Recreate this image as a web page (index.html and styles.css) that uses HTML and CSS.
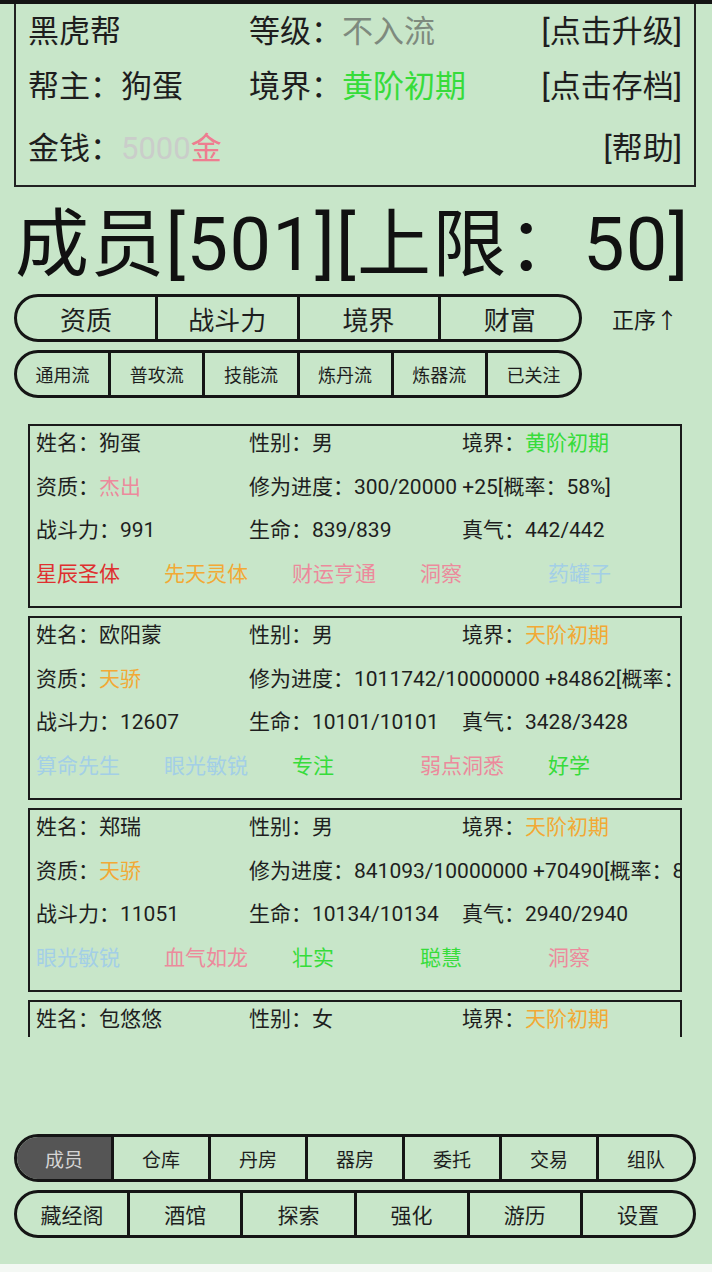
FILE: index.html
```html
<!DOCTYPE html>
<html lang="zh">
<head>
<meta charset="utf-8">
<title>成员</title>
<link rel="stylesheet" href="styles.css">
</head>
<body>
<div class="page">
  <div class="topbar"></div>
  <div class="header">
    <div class="hrow r1">
      <span class="hc1">黑虎帮</span>
      <span class="hc2">等级：<span class="c-gray">不入流</span></span>
      <span class="hc3">[点击升级]</span>
    </div>
    <div class="hrow r2">
      <span class="hc1">帮主：狗蛋</span>
      <span class="hc2">境界：<span class="c-green">黄阶初期</span></span>
      <span class="hc3">[点击存档]</span>
    </div>
    <div class="hrow r3">
      <span class="hc1">金钱：<span class="c-faint">5000</span><span class="c-pink">金</span></span>
      <span class="hc2"></span>
      <span class="hc3">[帮助]</span>
    </div>
  </div>

  <div class="title">成员[501][上限：50]</div>

  <div class="sortrow">
    <div class="pill sort">
      <div class="cell">资质</div>
      <div class="cell">战斗力</div>
      <div class="cell">境界</div>
      <div class="cell">财富</div>
    </div>
    <div class="order">正序↑</div>
  </div>

  <div class="pill filter">
    <div class="cell">通用流</div>
    <div class="cell">普攻流</div>
    <div class="cell">技能流</div>
    <div class="cell">炼丹流</div>
    <div class="cell">炼器流</div>
    <div class="cell">已关注</div>
  </div>

  <div class="list">
    <div class="card">
      <div class="crow"><span class="col">姓名：狗蛋</span><span class="col">性别：男</span><span class="col">境界：<span class="c-green">黄阶初期</span></span></div>
      <div class="crow"><span class="col">资质：<span class="c-pink2">杰出</span></span><span class="col wide">修为进度：300/20000 +25[概率：58%]</span></div>
      <div class="crow"><span class="col">战斗力：991</span><span class="col">生命：839/839</span><span class="col">真气：442/442</span></div>
      <div class="crow traits"><span class="t c-red">星辰圣体</span><span class="t c-orange">先天灵体</span><span class="t c-pink2">财运亨通</span><span class="t c-pink2">洞察</span><span class="t c-blue">药罐子</span></div>
    </div>
    <div class="card">
      <div class="crow"><span class="col">姓名：欧阳蒙</span><span class="col">性别：男</span><span class="col">境界：<span class="c-orange">天阶初期</span></span></div>
      <div class="crow"><span class="col">资质：<span class="c-orange">天骄</span></span><span class="col wide">修为进度：1011742/10000000 +84862[概率：</span></div>
      <div class="crow"><span class="col">战斗力：12607</span><span class="col">生命：10101/10101</span><span class="col">真气：3428/3428</span></div>
      <div class="crow traits"><span class="t c-blue">算命先生</span><span class="t c-blue">眼光敏锐</span><span class="t c-green">专注</span><span class="t c-pink2">弱点洞悉</span><span class="t c-green">好学</span></div>
    </div>
    <div class="card">
      <div class="crow"><span class="col">姓名：郑瑞</span><span class="col">性别：男</span><span class="col">境界：<span class="c-orange">天阶初期</span></span></div>
      <div class="crow"><span class="col">资质：<span class="c-orange">天骄</span></span><span class="col wide">修为进度：841093/10000000 +70490[概率：8</span></div>
      <div class="crow"><span class="col">战斗力：11051</span><span class="col">生命：10134/10134</span><span class="col">真气：2940/2940</span></div>
      <div class="crow traits"><span class="t c-blue">眼光敏锐</span><span class="t c-pink2">血气如龙</span><span class="t c-green">壮实</span><span class="t c-green">聪慧</span><span class="t c-pink2">洞察</span></div>
    </div>
    <div class="card">
      <div class="crow"><span class="col">姓名：包悠悠</span><span class="col">性别：女</span><span class="col">境界：<span class="c-orange">天阶初期</span></span></div>
    </div>
  </div>

  <div class="spacer"></div>

  <div class="pill nav1">
    <div class="cell active">成员</div>
    <div class="cell">仓库</div>
    <div class="cell">丹房</div>
    <div class="cell">器房</div>
    <div class="cell">委托</div>
    <div class="cell">交易</div>
    <div class="cell">组队</div>
  </div>
  <div class="pill nav2">
    <div class="cell">藏经阁</div>
    <div class="cell">酒馆</div>
    <div class="cell">探索</div>
    <div class="cell">强化</div>
    <div class="cell">游历</div>
    <div class="cell">设置</div>
  </div>
  <div class="bottomgap"></div>
  <div class="whitebar"></div>
</div>
</body>
</html>
```

FILE: styles.css
```css
* { box-sizing: border-box; }
html, body {
  margin: 0;
  padding: 0;
  background: #c8e6c9;
}
body {
  width: 712px;
  height: 1272px;
  overflow: hidden;
  font-family: Roboto, "Noto Sans CJK SC", "Noto Sans", sans-serif;
  color: #1e1e1e;
}
.page {
  display: flex;
  flex-direction: column;
  height: 1272px;
}
.topbar {
  height: 4px;
  flex: none;
  background: #141414;
}
.header {
  flex: none;
  height: 183px;
  margin: 0 16px 0 14px;
  border: 2px solid #222;
  border-top: none;
  padding: 0 12px;
  font-size: 31px;
}
.hrow {
  display: flex;
  align-items: center;
  white-space: nowrap;
}
.r1 { height: 48px; }
.r2 { height: 62px; }
.r3 { height: 62px; }
.hc1 { width: 221px; flex: none; }
.hc2 { flex: 1; }
.hc3 { flex: none; text-align: right; }

.c-gray { color: #7e8a7e; }
.c-green { color: #36dc3a; }
.c-faint { color: #cacdca; }
.c-pink { color: #ee7d90; }
.c-pink2 { color: #ec8a9c; }
.c-orange { color: #f2a935; }
.c-red { color: #df3030; }
.c-blue { color: #a3cfe6; }

.title {
  flex: none;
  height: 107px;
  line-height: 116px;
  padding-left: 15px;
  font-size: 74px;
  letter-spacing: 1.3px;
  color: #111;
  white-space: nowrap;
}

.sortrow {
  flex: none;
  display: flex;
  align-items: center;
  height: 48px;
}
.pill {
  display: flex;
  border: 3px solid #151515;
  border-radius: 26px;
  overflow: hidden;
  flex: none;
}
.pill .cell {
  flex: 1;
  display: flex;
  align-items: center;
  justify-content: center;
  white-space: nowrap;
}
.pill .cell + .cell {
  border-left: 3px solid #151515;
}
.sort {
  margin-left: 14px;
  width: 568px;
  height: 48px;
  font-size: 26px;
}
.order {
  margin-left: 30px;
  font-size: 22px;
  color: #1a1a1a;
}
.filter {
  margin: 8px 0 0 14px;
  width: 568px;
  height: 48px;
  font-size: 18px;
}

.list {
  flex: none;
  margin: 26px 0 0 28px;
  width: 654px;
  height: 613px;
  overflow: hidden;
  display: flex;
  flex-direction: column;
  gap: 8px;
}
.card {
  flex: none;
  height: 184px;
  border: 2px solid #1a1a1a;
  padding: 0 6px;
  overflow: hidden;
  display: flex;
  flex-direction: column;
  gap: 13.5px;
  font-size: 21px;
}
.crow {
  height: 30px;
  flex: none;
  display: flex;
  align-items: center;
  white-space: nowrap;
}
.col {
  width: 213px;
  flex: none;
}
.col.wide { width: auto; }
.traits .t {
  width: 128px;
  flex: none;
}

.spacer {
  flex: none;
  height: 97px;
}
.nav1 {
  margin-left: 14px;
  width: 682px;
  height: 48px;
  font-size: 19px;
}
.nav1 .active {
  background: #555555;
  color: #d4d4d4;
}
.nav2 {
  margin: 8px 0 0 14px;
  width: 682px;
  height: 48px;
  font-size: 21px;
}
.bottomgap {
  flex: none;
  height: 26px;
}
.whitebar {
  flex: 1;
  background: #f4f8f4;
}
```
